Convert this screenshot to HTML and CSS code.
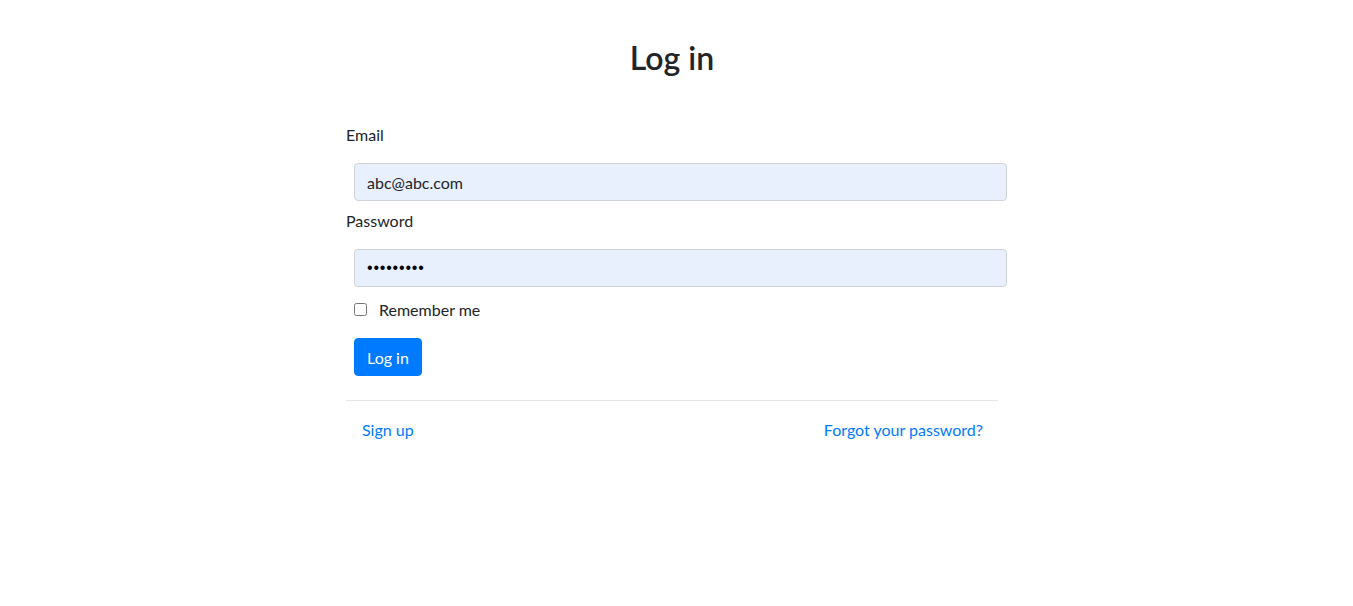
FILE: index.html
```html
<!DOCTYPE html>
<html lang="en">
<head>
    <meta charset="UTF-8">
    <meta name="viewport" content="width=device-width, initial-scale=1.0">
    <title>Log in</title>
    <link rel="stylesheet" href="styles.css">
</head>
<body>

    <div class="page">
        <h2 class="title">Log in</h2>

        <form class="login-form">
            <div class="field">
                <label for="email">Email</label>
                <input type="email" id="email" class="form-control" value="abc@abc.com">
            </div>

            <div class="field">
                <label for="password">Password</label>
                <input type="password" id="password" class="form-control secret" value="password1">
            </div>

            <div class="check">
                <input type="checkbox" id="remember">
                <label for="remember">Remember me</label>
            </div>

            <button type="submit" class="btn-primary">Log in</button>
        </form>

        <hr class="divider">

        <div class="links">
            <a href="#">Sign up</a>
            <a href="#">Forgot your password?</a>
        </div>
    </div>

</body>
</html>
```

FILE: styles.css
```css
body {
    font-family: "Lato", "Open Sans", Arial, sans-serif;
    font-size: 16px;
    line-height: 1.5;
    color: #212529;
    background-color: #fff;
    margin: 0;
}

.page {
    width: 652px;
    margin: 0 auto;
    padding-right: 9px;
}

.title {
    margin: 39px 0 0;
    font-size: 32px;
    font-weight: 600;
    line-height: 1.2;
    text-align: center;
}

.login-form {
    margin-top: 46px;
}

.field {
    margin-bottom: 8px;
}

.field label {
    display: block;
    margin-bottom: 16px;
}

.form-control {
    display: block;
    box-sizing: border-box;
    width: 653px;
    height: 38px;
    margin-left: 8px;
    padding: 6px 12px;
    font-family: inherit;
    font-size: 16px;
    color: #212529;
    background-color: #e8f0fe;
    border: 1px solid #ced4da;
    border-radius: 4px;
}

.form-control.secret {
    font-family: "Liberation Sans", Arial, sans-serif;
    letter-spacing: 0.8px;
    color: #000;
}

.check {
    display: flex;
    align-items: center;
    height: 24px;
    margin: 11px 0 16px 8px;
}

.check input {
    width: 13px;
    height: 13px;
    margin: 0 12px 2px 0;
}

.btn-primary {
    display: block;
    margin-left: 8px;
    height: 38px;
    padding: 6px 12px;
    font-family: inherit;
    font-size: 16px;
    color: #fff;
    background-color: #007bff;
    border: 1px solid #007bff;
    border-radius: 4px;
    cursor: pointer;
}

.divider {
    margin: 24px 0 0;
    border: 0;
    border-top: 1px solid rgba(0, 0, 0, 0.1);
}

.links {
    display: flex;
    justify-content: space-between;
    padding: 17px 15px 0 16px;
}

.links a {
    color: #007bff;
    text-decoration: none;
}
```
